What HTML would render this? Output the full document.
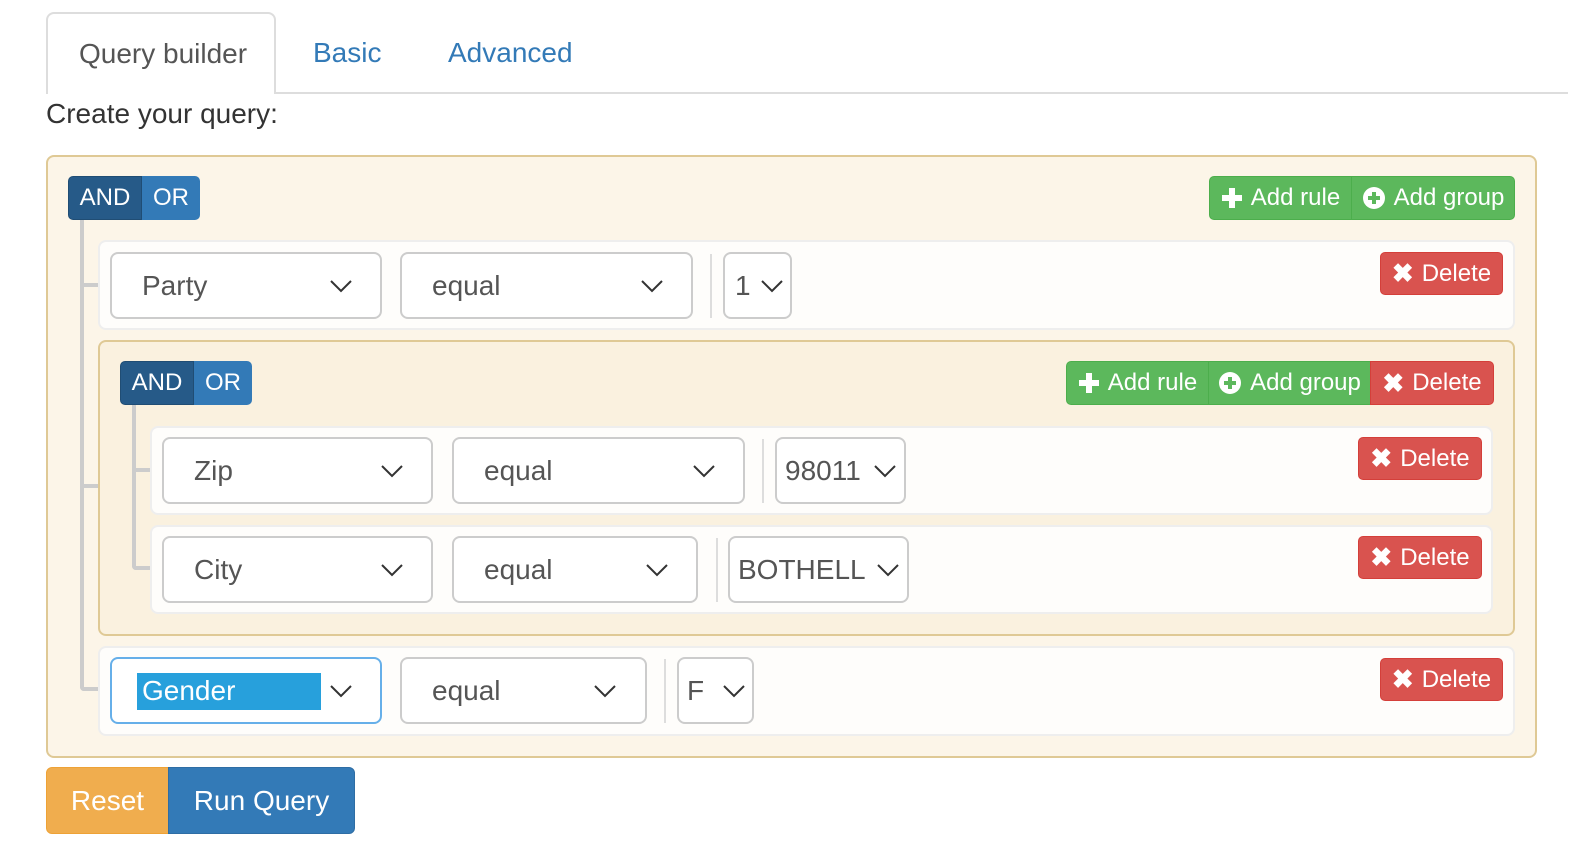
<!DOCTYPE html>
<html style="overflow:hidden;width:1577px;height:846px"><head><meta charset="utf-8"><style>
*{box-sizing:border-box;margin:0;padding:0}
html,body{width:1577px;height:846px;overflow:hidden}
body{background:#fff;font-family:"Liberation Sans",sans-serif;position:relative;color:#333}
.a{position:absolute}
.tabline{left:46px;top:92px;width:1522px;height:2px;background:#ddd}
.tab{left:46px;top:12px;width:230px;height:82px;border:2px solid #ddd;border-bottom:none;border-radius:8px 8px 0 0;background:#fff;font-size:28px;color:#555;padding:24px 0 0 31px}
.lnk{font-size:28px;color:#337ab7;top:37px}
.grp{border:2px solid #dfc995;border-radius:8px;background:#fcf5e8}
.grp2{background:#faf1df}
.rule{border:2px solid #eee;border-radius:8px;background:#fefdfb}
.sel{border:2px solid #ccc;border-radius:8px;background:#fff;font-size:28px;color:#555}
.sel span{position:absolute;top:16px}
.sel svg{position:absolute;top:26px}
.btn{color:#fff;font-size:24px;display:flex;align-items:center;justify-content:center;white-space:nowrap}
.ln{background:#ccc}
.sep{width:2px;background:#ddd}
</style></head><body>
<div class="a tabline"></div>
<div class="a tab">Query builder</div>
<div class="a lnk" style="left:313px">Basic</div>
<div class="a lnk" style="left:448px">Advanced</div>
<div class="a" style="left:46px;top:98px;font-size:28px;color:#333">Create your query:</div>

<div class="a grp" style="left:46px;top:155px;width:1491px;height:603px"></div>
<div class="a ln" style="left:80px;top:219px;width:4px;height:472px;border-radius:0 0 0 6px"></div>
<div class="a ln" style="left:80px;top:283px;width:18px;height:4px"></div>
<div class="a ln" style="left:80px;top:484px;width:18px;height:4px"></div>
<div class="a ln" style="left:80px;top:687px;width:18px;height:4px;border-radius:0 0 0 6px"></div>

<div class="a btn" style="left:68px;top:176px;width:74px;height:44px;background:#265a88;border-radius:5px 0 0 5px;border:1px solid #204d74">AND</div>
<div class="a btn" style="left:142px;top:176px;width:58px;height:44px;background:#337ab7;border-radius:0 5px 5px 0">OR</div>

<div class="a btn" style="left:1209px;top:176px;width:143px;height:44px;background:#5cb85c;border-radius:5px 0 0 5px;border:1px solid #4cae4c"><svg width="22" height="22" viewBox="0 0 22 22" style="margin-right:8px"><path d="M11 1v20M1 11h20" stroke="#fff" stroke-width="6"/></svg>Add rule</div>
<div class="a btn" style="left:1351px;top:176px;width:164px;height:44px;background:#5cb85c;border-radius:0 5px 5px 0;border:1px solid #4cae4c"><svg width="24" height="24" viewBox="0 0 24 24" style="margin-right:8px"><circle cx="12" cy="12" r="11" fill="#fff"/><path d="M12 6v12M6 12h12" stroke="#5cb85c" stroke-width="4"/></svg>Add group</div>

<div class="a rule" style="left:98px;top:240px;width:1417px;height:90px"></div>
<div class="a sel" style="left:110px;top:252px;width:272px;height:67px"><span style="left:30px">Party</span><svg style="left:218px" width="22" height="13"><path d="M1 1l10 10 10-10" fill="none" stroke="#333" stroke-width="2"/></svg></div>
<div class="a sel" style="left:400px;top:252px;width:293px;height:67px"><span style="left:30px">equal</span><svg style="left:239px" width="22" height="13"><path d="M1 1l10 10 10-10" fill="none" stroke="#333" stroke-width="2"/></svg></div>
<div class="a sep" style="left:710px;top:254px;height:64px"></div>
<div class="a sel" style="left:723px;top:252px;width:69px;height:67px"><span style="left:10px">1</span><svg style="left:36px" width="22" height="13"><path d="M1 1l10 10 10-10" fill="none" stroke="#333" stroke-width="2"/></svg></div>
<div class="a btn" style="left:1380px;top:252px;width:123px;height:43px;background:#d9534f;border:1px solid #d43f3a;border-radius:5px"><b style="font-size:26px;margin-right:8px">✖</b>Delete</div>

<div class="a grp grp2" style="left:98px;top:340px;width:1417px;height:296px"></div>
<div class="a ln" style="left:132px;top:404px;width:4px;height:166px;border-radius:0 0 0 6px"></div>
<div class="a ln" style="left:132px;top:468px;width:18px;height:4px"></div>
<div class="a ln" style="left:132px;top:566px;width:18px;height:4px;border-radius:0 0 0 6px"></div>
<div class="a btn" style="left:120px;top:361px;width:74px;height:44px;background:#265a88;border-radius:5px 0 0 5px;border:1px solid #204d74">AND</div>
<div class="a btn" style="left:194px;top:361px;width:58px;height:44px;background:#337ab7;border-radius:0 5px 5px 0">OR</div>
<div class="a btn" style="left:1066px;top:361px;width:143px;height:44px;background:#5cb85c;border-radius:5px 0 0 5px;border:1px solid #4cae4c"><svg width="22" height="22" viewBox="0 0 22 22" style="margin-right:8px"><path d="M11 1v20M1 11h20" stroke="#fff" stroke-width="6"/></svg>Add rule</div>
<div class="a btn" style="left:1208px;top:361px;width:163px;height:44px;background:#5cb85c;border:1px solid #4cae4c"><svg width="24" height="24" viewBox="0 0 24 24" style="margin-right:8px"><circle cx="12" cy="12" r="11" fill="#fff"/><path d="M12 6v12M6 12h12" stroke="#5cb85c" stroke-width="4"/></svg>Add group</div>
<div class="a btn" style="left:1370px;top:361px;width:124px;height:44px;background:#d9534f;border:1px solid #d43f3a;border-radius:0 5px 5px 0"><b style="font-size:26px;margin-right:8px">✖</b>Delete</div>

<div class="a rule" style="left:150px;top:426px;width:1343px;height:89px"></div>
<div class="a sel" style="left:162px;top:437px;width:271px;height:67px"><span style="left:30px">Zip</span><svg style="left:217px" width="22" height="13"><path d="M1 1l10 10 10-10" fill="none" stroke="#333" stroke-width="2"/></svg></div>
<div class="a sel" style="left:452px;top:437px;width:293px;height:67px"><span style="left:30px">equal</span><svg style="left:239px" width="22" height="13"><path d="M1 1l10 10 10-10" fill="none" stroke="#333" stroke-width="2"/></svg></div>
<div class="a sep" style="left:762px;top:439px;height:64px"></div>
<div class="a sel" style="left:775px;top:437px;width:131px;height:67px"><span style="left:8px">98011</span><svg style="left:97px" width="22" height="13"><path d="M1 1l10 10 10-10" fill="none" stroke="#333" stroke-width="2"/></svg></div>
<div class="a btn" style="left:1358px;top:437px;width:124px;height:43px;background:#d9534f;border:1px solid #d43f3a;border-radius:5px"><b style="font-size:26px;margin-right:8px">✖</b>Delete</div>

<div class="a rule" style="left:150px;top:525px;width:1343px;height:89px"></div>
<div class="a sel" style="left:162px;top:536px;width:271px;height:67px"><span style="left:30px">City</span><svg style="left:217px" width="22" height="13"><path d="M1 1l10 10 10-10" fill="none" stroke="#333" stroke-width="2"/></svg></div>
<div class="a sel" style="left:452px;top:536px;width:246px;height:67px"><span style="left:30px">equal</span><svg style="left:192px" width="22" height="13"><path d="M1 1l10 10 10-10" fill="none" stroke="#333" stroke-width="2"/></svg></div>
<div class="a sep" style="left:716px;top:538px;height:64px"></div>
<div class="a sel" style="left:728px;top:536px;width:181px;height:67px"><span style="left:8px">BOTHELL</span><svg style="left:147px" width="22" height="13"><path d="M1 1l10 10 10-10" fill="none" stroke="#333" stroke-width="2"/></svg></div>
<div class="a btn" style="left:1358px;top:536px;width:124px;height:43px;background:#d9534f;border:1px solid #d43f3a;border-radius:5px"><b style="font-size:26px;margin-right:8px">✖</b>Delete</div>

<div class="a rule" style="left:98px;top:646px;width:1417px;height:90px"></div>
<div class="a sel" style="left:110px;top:657px;width:272px;height:67px;border-color:#66afe9"><div class="a" style="left:25px;top:14px;width:184px;height:37px;background:#27a0dc"></div><span style="left:30px;color:#fff">Gender</span><svg style="left:218px" width="22" height="13"><path d="M1 1l10 10 10-10" fill="none" stroke="#333" stroke-width="2"/></svg></div>
<div class="a sel" style="left:400px;top:657px;width:247px;height:67px"><span style="left:30px">equal</span><svg style="left:192px" width="22" height="13"><path d="M1 1l10 10 10-10" fill="none" stroke="#333" stroke-width="2"/></svg></div>
<div class="a sep" style="left:664px;top:659px;height:64px"></div>
<div class="a sel" style="left:677px;top:657px;width:77px;height:67px"><span style="left:8px">F</span><svg style="left:44px" width="22" height="13"><path d="M1 1l10 10 10-10" fill="none" stroke="#333" stroke-width="2"/></svg></div>
<div class="a btn" style="left:1380px;top:658px;width:123px;height:43px;background:#d9534f;border:1px solid #d43f3a;border-radius:5px"><b style="font-size:26px;margin-right:8px">✖</b>Delete</div>

<div class="a btn" style="left:46px;top:767px;width:123px;height:67px;background:#f0ad4e;border:1px solid #eea236;border-radius:6px 0 0 6px;font-size:28px">Reset</div>
<div class="a btn" style="left:168px;top:767px;width:187px;height:67px;background:#337ab7;border:1px solid #2e6da4;border-radius:0 6px 6px 0;font-size:28px">Run Query</div>
</body></html>
